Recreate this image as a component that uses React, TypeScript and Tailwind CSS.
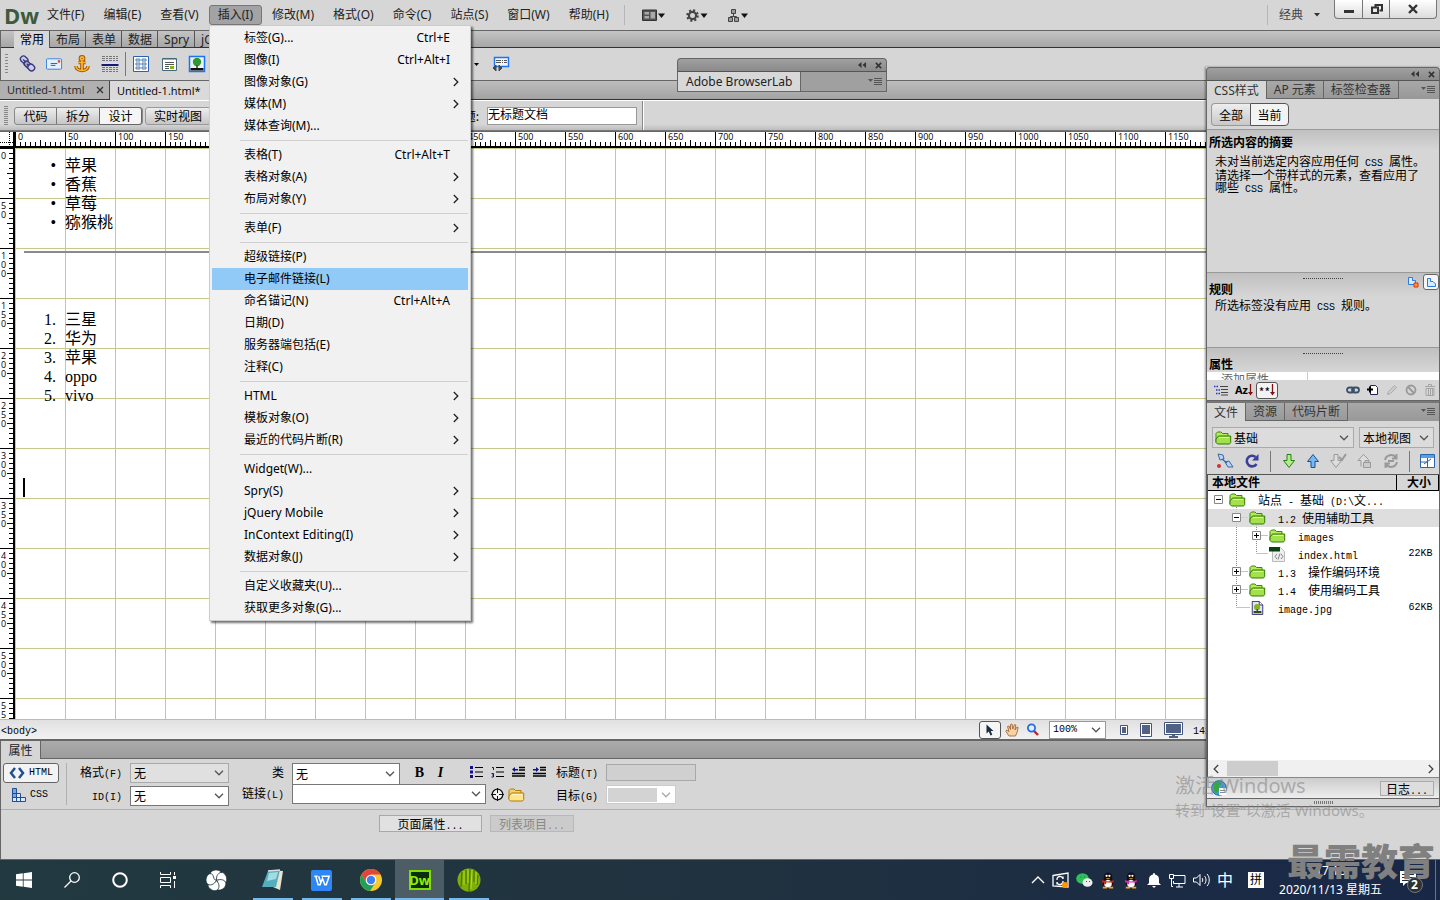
import { Fragment, type ReactNode } from "react";
import clsx from "clsx";

const uiFont = "font-['Noto_Sans','Noto_Sans_CJK_SC',sans-serif]";

type MenuEntry = { label: string; keys?: string; sub?: boolean; active?: boolean };

const menuGroups: MenuEntry[][] = [
  [
    { label: "标签(G)...", keys: "Ctrl+E" },
    { label: "图像(I)", keys: "Ctrl+Alt+I" },
    { label: "图像对象(G)", sub: true },
    { label: "媒体(M)", sub: true },
    { label: "媒体查询(M)..." },
  ],
  [
    { label: "表格(T)", keys: "Ctrl+Alt+T" },
    { label: "表格对象(A)", sub: true },
    { label: "布局对象(Y)", sub: true },
  ],
  [{ label: "表单(F)", sub: true }],
  [
    { label: "超级链接(P)" },
    { label: "电子邮件链接(L)", active: true },
    { label: "命名锚记(N)", keys: "Ctrl+Alt+A" },
    { label: "日期(D)" },
    { label: "服务器端包括(E)" },
    { label: "注释(C)" },
  ],
  [
    { label: "HTML", sub: true },
    { label: "模板对象(O)", sub: true },
    { label: "最近的代码片断(R)", sub: true },
  ],
  [
    { label: "Widget(W)..." },
    { label: "Spry(S)", sub: true },
    { label: "jQuery Mobile", sub: true },
    { label: "InContext Editing(I)", sub: true },
    { label: "数据对象(J)", sub: true },
  ],
  [{ label: "自定义收藏夹(U)..." }, { label: "获取更多对象(G)..." }],
];

// Latin runs are set in a narrow monospace so that they take half a CJK cell
const Song = ({ text }: { text: string }) => (
  <>
    {text.split(/([\x20-\x7e]+)/).map((part, i) =>
      i % 2 ? (
        <span
          key={i}
          className="font-['Liberation_Mono','Noto_Sans_CJK_SC',monospace] text-[10px] leading-none whitespace-pre"
        >
          {part}
        </span>
      ) : (
        <Fragment key={i}>{part}</Fragment>
      )
    )}
  </>
);

const Chevron = ({ className }: { className?: string }) => (
  <svg
    viewBox="0 0 10 6"
    className={clsx("pointer-events-none h-[6px] w-[10px]", className)}
    fill="none"
    stroke="currentColor"
    strokeWidth="1.3"
  >
    <path d="M1 .8 5 4.8 9 .8" />
  </svg>
);

type ComboProps = { label: string; id: string; value: string; className: string; disabled?: boolean };

const Combo = ({ label, id, value, className, disabled }: ComboProps) => (
  <div className={clsx("relative flex items-center border", className)}>
    <select
      id={id}
      aria-label={label}
      disabled={disabled}
      className="h-full w-full appearance-none bg-transparent px-[3px] text-black outline-none"
    >
      <option>{value}</option>
    </select>
    <Chevron
      className={clsx("absolute right-[4px]", disabled ? "text-[#aaa]" : "text-[#555]")}
    />
  </div>
);

const PanelMenu = () => (
  <svg viewBox="0 0 14 10" className="mr-[4px] ml-auto h-[10px] w-[14px]">
    <path d="M0 2h5L2.500 5z" fill="#555" />
    <path d="M6 1.500h8M6 3.500h8M6 5.500h8M6 7.500h8" stroke="#555" />
  </svg>
);

const PanelTitle = () => (
  <div className="flex h-[14px] items-center justify-end gap-[9px] rounded-t-[4px] border border-[#666] border-b-[#555] bg-linear-to-b from-[#a0a0a0] to-[#8a8a8a] pr-[4px]">
    <svg viewBox="0 0 8 6" className="h-[6px] w-[8px]" fill="#333">
      <path d="M3.500 0v6L0 3zM8 0v6L4.500 3z" />
    </svg>
    <svg viewBox="0 0 8 8" className="h-[7px] w-[7px]">
      <path d="m1 1 6 6M7 1 1 7" stroke="#333" strokeWidth="1.800" />
    </svg>
  </div>
);

const Folder = ({ yellow }: { yellow?: boolean }) => (
  <svg viewBox="0 0 17 14" className="h-[14px] w-[17px] shrink-0">
    <path
      d="M1 11V2.500L2.500 1H6l1.500 1.500H13V5"
      fill={yellow ? "#f6d264" : "#b8e85c"}
      stroke={yellow ? "#b07a10" : "#3a8a0c"}
    />
    <path
      d="M3.500 5h12.200v6.500L14.500 13H2.500L1 11.500V8z"
      fill={yellow ? "#ffe68a" : "#a4e04a"}
      stroke={yellow ? "#b07a10" : "#2f7a08"}
    />
    <path d="M4 6.500h10" stroke={yellow ? "#fff6c8" : "#dcf9a8"} />
  </svg>
);

const MenuBar = () => (
  <header className={clsx("flex h-[30px] shrink-0 items-center text-[12px] text-[#222]", uiFont)}>
    <span className="w-[38px] pl-[4px] font-['Liberation_Sans_Narrow','Open_Sans',sans-serif] text-[22px] leading-[26px] font-bold text-[#3d5a3d]">
      Dw
    </span>
    <nav className="flex items-center gap-px">
      {[
        "文件(F)",
        "编辑(E)",
        "查看(V)",
        "插入(I)",
        "修改(M)",
        "格式(O)",
        "命令(C)",
        "站点(S)",
        "窗口(W)",
        "帮助(H)",
      ].map((name) => (
        <button
          key={name}
          className={clsx(
            "h-[20px] rounded-[3px] border px-[8px] whitespace-nowrap",
            name === "插入(I)" ? "border-[#777] bg-[#a3a3a3]" : "border-transparent"
          )}
        >
          {name}
        </button>
      ))}
    </nav>
    <div className="ml-[6px] flex h-[20px] items-center gap-[20px] border-l border-[#b5b5b5] pl-[17px]">
      <button aria-label="布局" className="flex items-center">
        <svg viewBox="0 0 24 13" className="h-[13px] w-[24px]">
          <path d="M.5 1h14v10.500H.5z" fill="#555" stroke="#333" />
          <path d="M2.500 3H7v2.500H2.500zM2.500 7H7v2.500H2.500zM8.500 3h4.500v6.500H8.500z" fill="#aaa" />
          <path d="M16 4.500h7L19.500 9z" fill="#111" />
        </svg>
      </button>
      <button aria-label="扩展">
        <svg viewBox="0 0 22 13" className="h-[13px] w-[22px]">
          <circle cx="6.500" cy="6.500" r="3.600" fill="none" stroke="#444" strokeWidth="2.200" />
          <circle
            cx="6.500"
            cy="6.500"
            r="5.300"
            fill="none"
            stroke="#444"
            strokeWidth="2"
            strokeDasharray="2.080 2.080"
          />
          <path d="M14.500 4.500h7L18 9z" fill="#111" />
        </svg>
      </button>
      <button aria-label="站点">
        <svg viewBox="0 0 20 13" className="h-[13px] w-[20px]">
          <path d="M5.500 4v3.500M2.500 9V7.500h6V9" stroke="#444" fill="none" />
          <path d="M3.500.5h4v4h-4zM.5 8.500h4v4h-4zM6.500 8.500h4v4h-4z" fill="#999" stroke="#444" />
          <path d="M13 4.500h7L16.500 9z" fill="#111" />
        </svg>
      </button>
    </div>
    <div className="ml-auto flex h-[30px] items-center">
      <button className="flex h-[20px] items-center gap-[11px] border-l border-[#b5b5b5] px-[11px] text-[#444]">
        经典
        <svg viewBox="0 0 6 4" className="h-[4px] w-[6px]">
          <path d="M0 0h6L3 3.500z" fill="#333" />
        </svg>
      </button>
      <div className="mr-[3px] ml-[3px] flex h-[19px] self-start rounded-b-[4px] border border-t-0 border-[#777] bg-linear-to-b from-white to-[#dcdcdc]">
        <button aria-label="最小化" className="flex w-[28px] justify-center border-r border-[#777]">
          <svg viewBox="0 0 10 18" className="h-[18px] w-[10px]">
            <path d="M0 10h10v3H0z" fill="#333" />
          </svg>
        </button>
        <button aria-label="还原" className="flex w-[27px] justify-center border-r border-[#777]">
          <svg viewBox="0 0 13 18" className="h-[18px] w-[13px]" fill="none" stroke="#333" strokeWidth="2">
            <path d="M5.500 7V5H12v5.500H9.500M2 7.500h6V13H2z" />
          </svg>
        </button>
        <button aria-label="关闭" className="flex w-[46px] justify-center">
          <svg viewBox="0 0 10 18" className="h-[18px] w-[10px]">
            <path d="m1 5 8 8M9 5l-8 8" stroke="#333" strokeWidth="2.400" />
          </svg>
        </button>
      </div>
    </div>
  </header>
);

const InsertBar = () => (
  <section className={clsx("shrink-0 border-t border-l border-[#666] text-[12px]", uiFont)}>
    <div className="flex h-[17px] border-b border-[#333] bg-linear-to-b from-[#c4c4c4] to-[#a6a6a6] pl-[13px]">
      {["常用", "布局", "表单", "数据", "Spry", "jQuery Mobile", "InContext Editing"].map((tab, i) => (
        <button
          key={tab}
          className={clsx(
            "border-r border-[#555] pr-[5px] pl-[6px] leading-[17px] whitespace-nowrap",
            i === 0 ? "h-[17px] bg-[#d8d8d8] text-black" : "h-[16px] text-[#222]"
          )}
        >
          {tab}
        </button>
      ))}
    </div>
    <div className="flex h-[32px] items-center">
      <span className="ml-[4px] h-[20px] w-[3px] bg-[repeating-linear-gradient(#888_0_1px,transparent_1px_3px)]" />
      <div className="ml-[10px] flex items-center gap-[10px]">
        <svg viewBox="0 0 18 18" className="h-[18px] w-[18px]" fill="none">
          <g transform="rotate(45 9 9)" stroke="#3a3a78" strokeWidth="1.400">
            <rect x="0" y="5" width="8" height="6" rx="3" fill="#c9cdf5" />
            <rect x="6" y="6.500" width="8" height="5" rx="2.500" fill="#9da3e4" />
            <rect x="11" y="5.500" width="7" height="6" rx="3" fill="#c9cdf5" />
            <path d="M3 8.500h4M9 9h3" />
          </g>
        </svg>
        <svg viewBox="0 0 18 18" className="h-[18px] w-[17px]">
          <rect x=".5" y="3.500" width="16" height="11" rx="1" fill="#e3f0fd" stroke="#3280dd" />
          <path d="M5 8.500h7M5 10.500h5" stroke="#555" />
          <path d="M12.500 5h2.500v2.500h-2.500z" fill="#e2451c" />
        </svg>
        <svg viewBox="0 0 18 18" className="h-[18px] w-[18px]" fill="none">
          <g stroke="#a25806" strokeWidth="3.600">
            <circle cx="9" cy="3.500" r="1.600" />
            <path d="M9 6v9M5.500 7.500h7M3 11c0 3 3 4.500 6 4.500s6-1.500 6-4.500" />
          </g>
          <g stroke="#fbb433" strokeWidth="1.700">
            <circle cx="9" cy="3.500" r="1.600" />
            <path d="M9 6v9M5.500 7.500h7M3 11c0 3 3 4.500 6 4.500s6-1.500 6-4.500" />
          </g>
        </svg>
        <svg viewBox="0 0 18 18" className="h-[18px] w-[18px]">
          <path
            d="M1 1.500h16M1 3.500h16M1 5.500h16M1 12.500h16M1 14.500h16M1 16.500h16"
            stroke="#777"
            strokeDasharray="3 1 2 1"
          />
          <path d="M.5 7.500h17v3H.5z" fill="#d7dcff" />
          <path d="M.5 10h17" stroke="#161a70" strokeWidth="2" />
        </svg>
        <span className="-mx-[4px] h-[24px] w-px bg-[#777]" />
        <svg viewBox="0 0 18 18" className="h-[18px] w-[18px]">
          <path d="M1.500 1.500h15v15h-15z" fill="#fff" stroke="#2a62b0" />
          <path
            d="M4 4h4v2H4zM10 4h4v2h-4zM4 8h4v2H4zM10 8h4v2h-4zM4 12h4v2H4zM10 12h4v2h-4z"
            fill="#cfe2f8"
            stroke="#5580b8"
          />
        </svg>
        <svg viewBox="0 0 18 18" className="h-[18px] w-[18px]">
          <path d="M2.500 3.500h14v12h-14z" fill="#fff" stroke="#46687a" />
          <path d="M3 4.500h13" stroke="#8fb2c6" />
          <path d="M5 7.500h9M5 9.500h9M5 11.500h4M5 13.500h4" stroke="#555" />
          <path d="M10 11h4v3h-4z" fill="#7fb618" />
        </svg>
        <svg viewBox="0 0 18 18" className="h-[18px] w-[18px]">
          <path d="M1.500 1.500h15v15h-15z" fill="#e8f4ff" stroke="#1e74f0" strokeWidth="1.500" />
          <circle cx="9" cy="7" r="4.200" fill="#2f9a30" />
          <path d="M2.500 13h13v2.500h-13z" fill="#111" />
          <path d="M8.200 10h1.600v3H8.200z" fill="#6a4512" />
        </svg>
      </div>
      <svg viewBox="0 0 5 3" className="ml-[3px] h-[3px] w-[5px]">
        <path d="M0 0h5L2.500 3z" />
      </svg>
      <svg viewBox="0 0 5 3" className="ml-[260px] h-[3px] w-[5px]">
        <path d="M0 0h5L2.500 3z" />
      </svg>
      <svg viewBox="0 0 18 18" className="ml-[13px] h-[18px] w-[18px]">
        <path d="M2.500 2.500h14v9h-14z" fill="#eef6ff" stroke="#1e74f0" strokeWidth="1.400" />
        <path d="M4 5.500h5M10 5.500h1M12 5.500h3M4 7.500h5M10 7.500h1M12 7.500h3" stroke="#555" />
        <path d="m4 10-3 3 3 3zM7 10l3 3-3 3z" fill="#3c4c58" stroke="#3c4c58" />
      </svg>
    </div>
  </section>
);

const DocumentBar = () => (
  <section className="shrink-0">
    <div className="flex h-[20px] border-t border-b border-t-[#666] border-b-[#333] bg-linear-to-b from-[#bdbdbd] to-[#a3a3a3] font-['Open_Sans',sans-serif] text-[11px] leading-[18px] whitespace-nowrap">
      <button className="flex w-[110px] items-center justify-between border-r border-[#444] bg-[#b0b0b0] pr-[5px] pl-[7px] text-[#222]">
        Untitled-1.html
        <svg viewBox="0 0 8 8" className="h-[8px] w-[8px]">
          <path d="m1 1 6 6M7 1 1 7" stroke="#333" strokeWidth="1.300" />
        </svg>
      </button>
      <button className="h-[19px] w-[110px] bg-[#dadada] pl-[7px] text-left">Untitled-1.html*</button>
    </div>
    <div className="flex h-[31px] items-center border-t border-b border-t-white border-b-[#777] bg-linear-to-b from-[#d6d6d6] from-80% to-[#bdbdbd] font-['Noto_Sans_CJK_SC',sans-serif] text-[12px]">
      <span className="ml-[4px] h-[20px] w-[4px] bg-[repeating-linear-gradient(#888_0_1px,transparent_1px_2px)]" />
      <div className="ml-[6px] flex h-[18px] rounded-[3px] border border-[#888] bg-linear-to-b from-[#eee] to-[#c6c6c6]">
        <button className="w-[42px] border-r border-[#777] leading-[16px]">代码</button>
        <button className="w-[42px] leading-[16px]">拆分</button>
        <button className="-my-px w-[43px] rounded-r-[3px] border border-[#666] bg-[#f5f5f5] leading-[16px]">
          设计
        </button>
      </div>
      <button className="ml-[2px] h-[18px] w-[66px] rounded-[3px] border border-[#999] bg-linear-to-b from-[#eee] to-[#c6c6c6] leading-[16px]">
        实时视图
      </button>
      <label htmlFor="doc-title" className="w-[268px] text-right">
        标题:
      </label>
      <input
        id="doc-title"
        defaultValue="无标题文档"
        className="ml-[8px] h-[18px] w-[150px] border border-[#999] bg-white pb-[3px] outline-none"
      />
      <span className="ml-[5px] h-[29px] w-[2px] border-r border-l border-r-white border-l-[#888]" />
    </div>
  </section>
);

const fives = [5, 10, 15, 20, 25, 30, 35, 40, 45];

const RulerCell = ({ value }: { value: number }) => (
  <div className="relative h-[14px] w-[50px] shrink-0 border-l border-black pl-[2px] leading-[10px]">
    {value}
    <svg viewBox="0 0 50 14" className="absolute top-0 -left-px h-[14px] w-[50px]" stroke="#000">
      {fives.map((x) => (
        <path key={x} d={`M${x + 0.5} ${x === 25 ? 8 : 10}V14`} />
      ))}
    </svg>
  </div>
);

const SideRulerCell = ({ value }: { value: number }) => (
  <div className="relative flex h-[50px] w-full shrink-0 flex-col border-t border-black pt-[2px] pl-[1px] leading-[9px]">
    {String(value)
      .split("")
      .map((digit, i) => (
        <span key={i}>{digit}</span>
      ))}
    <svg viewBox="0 0 14 50" className="absolute -top-px right-0 h-[50px] w-[14px]" stroke="#000">
      {fives.map((y) => (
        <path key={y} d={`M${y === 25 ? 8 : 10} ${y + 0.5}H14`} />
      ))}
    </svg>
  </div>
);

const Marker = ({ children }: { children: ReactNode }) => (
  <span className="w-[41px] pr-[9px] text-right">{children}</span>
);

const Editor = () => (
  <main className="flex min-h-0 flex-1 flex-col bg-white">
    <div className="flex h-[17px] shrink-0 overflow-hidden border-t border-b-2 border-t-[#666] border-b-black font-['Open_Sans',sans-serif] text-[9px]">
      <div className="w-[15px] shrink-0 border-r-2 border-black">
        <svg viewBox="0 0 13 14" className="h-[14px] w-[13px]" stroke="#000" strokeDasharray="1 1">
          <path d="M0 10.500h13M9.500 0v14" />
        </svg>
      </div>
      {Array.from({ length: 24 }, (_, i) => (
        <RulerCell key={i} value={i * 50} />
      ))}
    </div>
    <div className="flex min-h-0 flex-1">
      <div className="flex w-[15px] shrink-0 flex-col overflow-hidden border-r-2 border-black font-['Open_Sans',sans-serif] text-[9px]">
        {Array.from({ length: 12 }, (_, i) => (
          <SideRulerCell key={i} value={i * 50} />
        ))}
      </div>
      <article className="flex-1 overflow-hidden bg-[linear-gradient(to_right,#c8c88c_1px,transparent_1px),linear-gradient(to_bottom,#c8c88c_1px,transparent_1px)] bg-size-[50px_50px] pt-[8px] pl-[9px] font-['Liberation_Serif','Noto_Sans_CJK_SC',serif] text-[16px] leading-[19px]">
        <ul>
          {["苹果", "香蕉", "草莓", "猕猴桃"].map((fruit) => (
            <li key={fruit} className="flex">
              <Marker>•</Marker>
              {fruit}
            </li>
          ))}
        </ul>
        <hr className="mt-[19px] border-t-2 border-t-[#8a8a8a]" />
        <ol className="mt-[57px]">
          {["三星", "华为", "苹果", "oppo", "vivo"].map((brand, i) => (
            <li key={brand} className="flex">
              <Marker>{i + 1}.</Marker>
              {brand}
            </li>
          ))}
        </ol>
        <div className="-ml-px mt-[73px] h-[19px] w-[2px] bg-black" />
      </article>
    </div>
  </main>
);

const StatusBar = () => (
  <div className="flex h-[20px] shrink-0 items-center justify-between overflow-hidden border-t border-[#bbb] bg-linear-to-b from-[#e0e0e0] to-[#f2f2f2] text-[12px]">
    <span className="pl-[1px] leading-[16px]">
      <Song text="<body>" />
    </span>
    <div className="flex w-[461px] items-center">
      <button
        aria-label="选取"
        className="flex h-[18px] w-[22px] items-center justify-center rounded-[3px] border border-[#555] bg-[#f5f5f5]"
      >
        <svg viewBox="0 0 8 12" className="h-[12px] w-[8px]">
          <path d="M.5.500v9L2.800 7.600 4.500 11.500l1.800-.8L4.700 7h2.800z" fill="#1c2c3c" />
        </svg>
      </button>
      <svg viewBox="0 0 14 14" className="ml-[4px] h-[14px] w-[14px]">
        <path
          d="M4 13 1 8.500 1.500 7 4 8.500 2.500 3.500l1.500-.500L5.500 6.500V1.500L7 1l.800 5L9.500 1.500l1.300.5L10 7l2-3 1.200.5L12 9.500 10.500 13z"
          fill="#f9d2a4"
          stroke="#9a5a24"
          strokeWidth=".8"
        />
      </svg>
      <svg viewBox="0 0 14 14" className="ml-[7px] h-[14px] w-[14px]" fill="none">
        <path d="m8 8 4 4" stroke="#b02a2a" strokeWidth="2.400" />
        <circle cx="5.500" cy="5" r="3.600" fill="#dff0ff" stroke="#2a6be0" strokeWidth="1.800" />
      </svg>
      <Combo
        id="zoom"
        label="缩放比率"
        value="100%"
        className="ml-[9px] h-[18px] w-[57px] border-[#999] bg-white font-['Liberation_Mono',monospace] text-[10px]"
      />
      <svg viewBox="0 0 8 10" className="ml-[14px] h-[10px] w-[8px]">
        <path d="M.5.500h7v9h-7z" fill="#fff" stroke="#445577" />
        <path d="M2 2h4v6H2z" fill="#526287" />
      </svg>
      <svg viewBox="0 0 12 14" className="ml-[12px] h-[14px] w-[12px]">
        <path d="M.5.500h11v13H.5z" fill="#fff" stroke="#445577" />
        <path d="M2 2h8v9H2z" fill="#526287" />
      </svg>
      <svg viewBox="0 0 19 16" className="ml-[12px] h-[16px] w-[19px]">
        <path d="M.5.500h18v12H.5z" fill="#fff" stroke="#445577" />
        <path d="M2 2h15v9H2zM8 13h3v1h3v2H5v-2h3z" fill="#526287" />
      </svg>
      <span className="ml-[10px] whitespace-nowrap">
        <Song text="1425 x 577" />
      </span>
    </div>
  </div>
);

const Tool = ({ label, children }: { label: string; children: ReactNode }) => (
  <button aria-label={label} className="flex w-[21px] items-center justify-center">
    {children}
  </button>
);

const PropertyInspector = () => (
  <section className="h-[121px] shrink-0 border-t-2 border-b border-l border-[#666] bg-[#d6d6d6] font-['Noto_Sans_CJK_SC',sans-serif] text-[12px]">
    <div className="flex h-[18px] border-b border-[#666] bg-linear-to-b from-[#ababab] to-[#9c9c9c]">
      <button className="h-[18px] w-[40px] border-r border-[#666] bg-[#d6d6d6] text-[#222]">属性</button>
    </div>
    <div className="flex h-[51px] border-b border-[#b0b0b0] pt-[4px]">
      <div className="mr-[7px] ml-[2px] w-[56px]">
        <button className="flex h-[20px] w-full items-center justify-center gap-[4px] rounded-[3px] border border-[#666] bg-[#f3f3f3]">
          <svg viewBox="0 0 16 12" className="h-[12px] w-[16px]" fill="none" stroke="#1d4f96" strokeWidth="2.500">
            <path d="M6 1 2 6l4 5M10 1l4 5-4 5" />
          </svg>
          <Song text="HTML" />
        </button>
        <button className="mt-[2px] flex h-[20px] items-center gap-[4px] pl-[9px]">
          <svg viewBox="0 0 14 14" className="h-[14px] w-[14px]" stroke="#1d4f96">
            <path d="M.5.500h4v13h-4z" fill="#7ea4d8" />
            <path d="M.5 9.500h13v4H.5zM4.500 5.500h4v8h-4z" fill="#dce9fa" />
            <path d="M.5 5.500h4" />
          </svg>
          <Song text="CSS" />
        </button>
      </div>
      <div className="h-[42px] w-[56px] border-l border-[#b0b0b0] text-right">
        <label htmlFor="format" className="block leading-[18px] whitespace-nowrap">
          <Song text="格式(F)" />
        </label>
        <label htmlFor="el-id" className="mt-[5px] block leading-[18px]">
          <Song text="ID(I)" />
        </label>
      </div>
      <div className="ml-[8px] flex flex-col gap-[3px]">
        <Combo id="format" label="格式" value="无" className="h-[20px] w-[99px] border-[#aaa] bg-[#e0e0e0]" />
        <Combo id="el-id" label="ID" value="无" className="h-[20px] w-[99px] border-[#777] bg-white" />
      </div>
      <div className="w-[55px] text-right">
        <label htmlFor="class" className="block leading-[18px]">
          类
        </label>
        <label htmlFor="link" className="mt-[3px] block leading-[18px]">
          <Song text="链接(L)" />
        </label>
      </div>
      <div className="ml-[8px]">
        <div className="flex">
          <Combo id="class" label="类" value="无" className="h-[22px] w-[108px] border-[#777] bg-white" />
          <div className="flex h-[18px] items-center pl-[9px]">
            <button className="w-[21px] font-['Liberation_Serif',serif] text-[14px] font-bold">B</button>
            <button className="w-[21px] font-['Liberation_Serif',serif] text-[14px] font-bold italic">I</button>
            <span className="w-[15px]" />
            <Tool label="项目列表">
              <svg viewBox="0 0 13 12" className="h-[12px] w-[13px]">
                <path d="M0 0h3v3H0zM0 4.500h3v3H0zM0 9h3v3H0z" fill="#10108a" />
                <path d="M5 1.500h8M5 6h8M5 10.500h8" stroke="#000" />
              </svg>
            </Tool>
            <Tool label="编号列表">
              <svg viewBox="0 0 13 12" className="h-[12px] w-[13px]">
                <path d="M1 1.500h1.500V4M.5 7.500h2v1.500h-1h1v2h-2" stroke="#10108a" fill="none" />
                <path d="M5 1.500h8M5 6h8M5 10.500h8" stroke="#000" />
              </svg>
            </Tool>
            <Tool label="文本凸出">
              <svg viewBox="0 0 13 12" className="h-[12px] w-[13px]">
                <path d="M0 3.500 3 1v5zM3 3h3v1.500H3z" fill="#10108a" />
                <path d="M7 1.500h6M7 4h6M0 7.500h13M0 10h13" stroke="#000" strokeWidth="1.500" />
              </svg>
            </Tool>
            <Tool label="文本缩进">
              <svg viewBox="0 0 13 12" className="h-[12px] w-[13px]">
                <path d="M6 3.500 3 1v5zM0 3h3v1.500H0z" fill="#10108a" />
                <path d="M7 1.500h6M7 4h6M0 7.500h13M0 10h13" stroke="#000" strokeWidth="1.500" />
              </svg>
            </Tool>
          </div>
        </div>
        <div className="flex items-center">
          <Combo id="link" label="链接" value="" className="-mt-px h-[20px] w-[194px] border-[#777] bg-white" />
          <button aria-label="指向文件" className="ml-[5px]">
            <svg viewBox="0 0 13 13" className="h-[13px] w-[13px]" fill="none" stroke="#111">
              <circle cx="6.500" cy="6.500" r="5.300" fill="#f4f4f4" strokeWidth="1.300" />
              <path d="M6.500 0v5M6.500 8v5M0 6.500h5M8 6.500h5" />
            </svg>
          </button>
          <button aria-label="浏览文件" className="ml-[4px]">
            <Folder yellow />
          </button>
        </div>
      </div>
      <div className="w-[48px] pl-[6px] whitespace-nowrap">
        <label htmlFor="title" className="block leading-[18px]">
          <Song text="标题(T)" />
        </label>
        <label htmlFor="target" className="mt-[5px] block leading-[18px]">
          <Song text="目标(G)" />
        </label>
      </div>
      <div className="ml-[8px]">
        <input
          id="title"
          disabled
          className="mt-px block h-[17px] w-[90px] border border-[#a8a8a8] bg-[#d0d0d0]"
        />
        <div className="relative mt-[4px] flex h-[19px] w-[70px] items-center border border-[#ccc] bg-white">
          <select id="target" disabled className="ml-px h-[14px] w-[49px] appearance-none bg-[#d3d3d3]" />
          <Chevron className="absolute right-[4px] text-[#aaa]" />
        </div>
      </div>
    </div>
    <div className="flex gap-[8px] pt-[5px] pl-[378px]">
      <button className="h-[17px] w-[103px] border border-[#a8a8a8] bg-[#e1e1e1] leading-[15px]">
        <Song text="页面属性..." />
      </button>
      <button disabled className="h-[17px] w-[84px] border border-[#b8b8b8] bg-[#cbcbcb] leading-[15px] text-[#888]">
        <Song text="列表项目..." />
      </button>
    </div>
  </section>
);

const InsertMenu = () => (
  <div
    className={clsx(
      "absolute top-[25px] left-[209px] w-[262px] border border-[#ccc] bg-[#f1f1f1] px-[2px] py-px text-[12px] text-black shadow-[2px_2px_2px_rgba(0,0,0,0.55)]",
      uiFont
    )}
  >
    {menuGroups.map((group, i) => (
      <Fragment key={i}>
        {i > 0 && <hr className="my-[3px] ml-[28px] border-[#d0d0d0]" />}
        {group.map(({ label, keys, sub, active }) => (
          <button
            key={label}
            className={clsx(
              "flex h-[22px] w-full items-center pr-[7px] pl-[32px]",
              active && "bg-[#91c9f7]"
            )}
          >
            {label}
            {keys && <span className="mr-[11px] ml-auto">{keys}</span>}
            {sub && <Chevron className="ml-auto h-[5px] w-[8px] -rotate-90 text-[#222]" />}
          </button>
        ))}
      </Fragment>
    ))}
  </div>
);

const BrowserLab = () => (
  <aside className={clsx("absolute top-[58px] left-[677px] w-[210px] text-[12px]", uiFont)}>
    <PanelTitle />
    <div className="flex h-[20px] items-center border border-t-0 border-[#666] bg-[#a0a0a0]">
      <button className="h-full border-r border-[#666] bg-[#d8d8d8] px-[8px] text-[12px] whitespace-nowrap text-[#222]">
        Adobe BrowserLab
      </button>
      <PanelMenu />
    </div>
  </aside>
);

const PanelTabs = ({ tabs }: { tabs: string[] }) => (
  <div className={clsx("flex h-[18px] shrink-0 items-center bg-linear-to-b from-[#a8a8a8] to-[#989898]", uiFont)}>
    {tabs.map((tab, i) => (
      <button
        key={tab}
        className={clsx(
          "h-full border-r border-[#666] px-[7px] leading-[17px] whitespace-nowrap",
          i === 0 ? "bg-[#d6d6d6] text-[#333]" : "border-b text-[#333]"
        )}
      >
        {tab}
      </button>
    ))}
    <PanelMenu />
  </div>
);

const Heading = ({ children, grip }: { children: ReactNode; grip?: boolean }) => (
  <div className="border-t border-[#999] bg-linear-to-b from-[#c0c0c0] to-[#d6d6d6] px-[2px]">
    {grip && <div className="mx-auto mt-[5px] -mb-[2px] h-px w-[40px] border-t border-dotted border-[#444]" />}
    <h2 className="pt-[3px] leading-[17px] font-bold">{children}</h2>
  </div>
);

const files = [
  { name: "1.2 使用辅助工具", depth: 1, toggle: "-", icon: "folder", size: "", selected: true },
  { name: "images", depth: 2, toggle: "+", icon: "folder", size: "" },
  { name: "index.html", depth: 2, toggle: "", icon: "html", size: "22KB" },
  { name: "1.3  操作编码环境", depth: 1, toggle: "+", icon: "folder", size: "" },
  { name: "1.4  使用编码工具", depth: 1, toggle: "+", icon: "folder", size: "" },
  { name: "image.jpg", depth: 1, toggle: "", icon: "image", size: "62KB" },
];

const Toggle = ({ sign }: { sign: string }) => (
  <svg viewBox="0 0 9 9" className="h-[9px] w-[9px] shrink-0" stroke="#000">
    <path d="M.5.500h8v8h-8z" fill="#fff" stroke="#888" />
    <path d={sign === "+" ? "M2 4.500h5M4.500 2v5" : "M2 4.500h5"} />
  </svg>
);

const FileIcon = ({ kind }: { kind: string }) => {
  if (kind === "folder") return <Folder />;
  if (kind === "html") {
    return (
      <svg viewBox="0 0 17 16" className="h-[16px] w-[17px] shrink-0">
        <path d="M3.500 1.500h8l4 4v10h-12z" fill="#eee" stroke="#bbb" />
        <path d="M0 1h11v4.500H0z" fill="#0a4012" />
        <path d="m8 8-2 2.500L8 13M12 8l2 2.500-2 2.500M11 7.500l-2 6" fill="none" stroke="#888" />
      </svg>
    );
  }
  return (
    <svg viewBox="0 0 17 16" className="h-[14px] w-[17px] shrink-0">
      <path d="M2.500.500h8l4 4v11h-12z" fill="#dfe4ff" stroke="#222266" />
      <path d="M10.500.500v4h4" fill="#fff" stroke="#222266" />
      <circle cx="8" cy="7" r="3.500" fill="#86b41c" />
      <path d="M7.500 9h1.500v3H7.500zM4 11.500h9V14H4z" fill="#34500c" />
    </svg>
  );
};

const FileTable = () => (
  <div className="relative min-h-0 flex-1 border-t border-l border-[#555] bg-white">
    <svg className="absolute top-[22px] left-0 h-[130px] w-[60px]" stroke="#888" strokeDasharray="1 1" fill="none">
      <path d="M28.500 8v102M28.500 20.500H40M28.500 74.500H40M28.500 92.500H40M28.500 110.500H42M48.500 26v30M48.500 38.500H60M48.500 56.500H60" />
    </svg>
    <table className="relative w-full table-fixed border-collapse">
      <thead>
        <tr className="h-[15px] border-b border-black bg-[#d6d6d6] text-left leading-[14px]">
          <th className="border-r border-black pl-[4px]">本地文件</th>
          <th className="w-[42px] border-r border-black pl-[10px]">大小</th>
        </tr>
      </thead>
      <tbody>
        <tr className="h-[18px]">
          <td colSpan={2}>
            <div className="flex h-[18px] items-center pl-[6px] leading-[16px] whitespace-nowrap">
              <Toggle sign="-" />
              <span className="w-[6px]" />
              <Folder />
              <span className="ml-[12px]">
                <Song text="站点 - 基础 (D:\文..." />
              </span>
            </div>
          </td>
        </tr>
        {files.map(({ name, depth, toggle, icon, size, selected }) => (
          <tr key={name} className={clsx("h-[18px]", selected && "bg-[#d6d6d6]/80")}>
            <td className={clsx(depth === 1 ? "pl-[24px]" : "pl-[44px]")}>
              <div className="flex h-[18px] items-center leading-[16px] whitespace-nowrap">
                {toggle ? <Toggle sign={toggle} /> : <span className="w-[9px] shrink-0" />}
                <span className="w-[8px] shrink-0" />
                <FileIcon kind={icon} />
                <span className="ml-[12px]">
                  <Song text={name} />
                </span>
              </div>
            </td>
            <td>
              <div className="flex h-[18px] items-center justify-end pr-[6px] leading-[16px]">
                <Song text={size} />
              </div>
            </td>
          </tr>
        ))}
      </tbody>
    </table>
  </div>
);

const SidePanels = () => (
  <aside className="absolute top-[67px] right-0 bottom-[93px] flex w-[234px] flex-col bg-[#d6d6d6] font-['Noto_Sans_CJK_SC',sans-serif] text-[12px] text-black shadow-[-1px_0_2px_rgba(0,0,0,0.4)]">
    <PanelTitle />
    <div className="flex min-h-0 flex-1 flex-col border-r border-b border-l border-[#666]">
      <PanelTabs tabs={["CSS样式", "AP 元素", "标签检查器"]} />
      <div className="flex h-[30px] shrink-0 items-center pl-[4px]">
        <button className="h-[23px] w-[39px] rounded-l-[4px] border border-r-0 border-[#999] bg-linear-to-b from-[#eee] to-[#c8c8c8] leading-[19px]">
          全部
        </button>
        <button className="h-[23px] w-[39px] rounded-r-[4px] border border-[#555] bg-[#f3f3f3] leading-[19px]">
          当前
        </button>
      </div>
      <div className="h-[143px] shrink-0">
        <Heading>所选内容的摘要</Heading>
        <p className="pt-[5px] pl-[8px] leading-[12px] whitespace-nowrap">
          <Song text="未对当前选定内容应用任何 CSS 属性。" />
          <br />
          请选择一个带样式的元素，查看应用了
          <br />
          <Song text="哪些 CSS 属性。" />
        </p>
      </div>
      <div className="relative h-[75px] shrink-0">
        <Heading grip>规则</Heading>
        <p className="pl-[8px] leading-[16px]">
          <Song text="所选标签没有应用 CSS 规则。" />
        </p>
        <div className="absolute top-[2px] right-0 flex items-center gap-[4px]">
          <button aria-label="显示所选属性的信息">
            <svg viewBox="0 0 12 12" className="h-[12px] w-[12px]">
              <path d="M1.500 1.500h4v3h3v4h-7z" fill="#d9ecff" stroke="#2d7be0" />
              <path d="M7 7h4v4H7z" fill="#ff9a2e" stroke="#e03010" />
            </svg>
          </button>
          <button
            aria-label="显示层叠"
            className="flex h-[16px] w-[16px] items-center justify-center rounded-[3px] border border-[#666] bg-[#f6f6f6]"
          >
            <svg viewBox="0 0 11 11" className="h-[11px] w-[11px]">
              <path d="M1.500 1.500h3v3H7l2.500 2.500v2.500h-8z" fill="#d9ecff" stroke="#2d7be0" />
            </svg>
          </button>
        </div>
      </div>
      <div className="h-[33px] shrink-0 overflow-hidden">
        <Heading grip>属性</Heading>
        <div className="flex bg-white pl-[14px] leading-[14px] text-[#666]">
          <span className="w-[87px] border-r border-[#ccc]">添加属性</span>
        </div>
      </div>
      <div className="flex h-[21px] shrink-0 items-center border-b border-[#666] pr-[3px] pl-[6px]">
        <svg viewBox="0 0 16 12" className="h-[12px] w-[16px]">
          <path d="M1 2.500h4M3 6h4M3 9.500h4" stroke="#2038c0" strokeWidth="1.500" strokeDasharray="1.500 1" />
          <path d="M7 2.500h8M8 5.500h7M8 8.500h7M8 11h7" stroke="#444" />
        </svg>
        <span className="ml-[6px] font-['Open_Sans',sans-serif] text-[11px] font-bold">Az</span>
        <svg viewBox="0 0 5 12" className="h-[12px] w-[5px]">
          <path d="M2.500 0v9" stroke="#801010" strokeWidth="1.300" />
          <path d="M0 8h5l-2.500 3.500z" fill="#801010" />
        </svg>
        <button className="ml-[3px] flex h-[17px] w-[22px] items-center justify-center rounded-[3px] border border-[#555] bg-[#f3f3f3]">
          <span className="pt-[3px] text-[12px] leading-[12px]">**</span>
          <svg viewBox="0 0 5 12" className="h-[12px] w-[5px]">
            <path d="M2.500 0v9" stroke="#801010" strokeWidth="1.300" />
            <path d="M0 8h5l-2.500 3.500z" fill="#801010" />
          </svg>
        </button>
        <div className="ml-auto flex items-center gap-[7px]">
          <svg viewBox="0 0 14 8" className="h-[8px] w-[14px]" fill="none" stroke="#3a5068" strokeWidth="1.800">
            <rect x="1" y="1.500" width="7" height="5" rx="2.500" />
            <rect x="6" y="1.500" width="7" height="5" rx="2.500" />
          </svg>
          <svg viewBox="0 0 12 12" className="h-[12px] w-[12px]">
            <path d="M3.500 1.500h5l2 2v7h-7z" fill="#fff" stroke="#22225a" />
            <path d="M0 5.500h6M3 2.500v6" stroke="#000" strokeWidth="2" />
          </svg>
          <svg viewBox="0 0 12 12" className="h-[12px] w-[12px]">
            <path d="m1.500 10.500 1-3 6-6 2 2-6 6z" fill="#ccc" stroke="#aaa" />
          </svg>
          <svg viewBox="0 0 12 12" className="h-[12px] w-[12px]" fill="none" stroke="#999" strokeWidth="1.800">
            <circle cx="6" cy="6" r="4.500" />
            <path d="m3 3 6 6" />
          </svg>
          <svg viewBox="0 0 12 12" className="h-[12px] w-[12px]" fill="none" stroke="#a5a5a5">
            <path d="M1 2.500h10M4.500 2V.500h3V2M2 4.500h8v7H2zM4.500 5v6M6.500 5v6M8.500 5v6" />
          </svg>
        </div>
      </div>
      <div className="h-[2px] shrink-0 bg-[#777]" />
      <PanelTabs tabs={["文件", "资源", "代码片断"]} />
      <div className="flex h-[27px] shrink-0 items-end justify-between pr-[5px] pl-[5px]">
        <div className="relative h-[21px] w-[142px]">
          <span className="pointer-events-none absolute top-[4px] left-[3px] z-10">
            <Folder />
          </span>
          <Combo id="site" label="站点" value="基础" className="h-[21px] border-[#aaa] bg-[#dcdcdc] pl-[18px]" />
        </div>
        <Combo id="view" label="视图" value="本地视图" className="h-[21px] w-[75px] border-[#aaa] bg-[#dcdcdc]" />
      </div>
      <div className="flex h-[26px] shrink-0 items-center justify-between pr-[4px] pl-[9px]">
        <svg viewBox="0 0 18 18" className="h-[18px] w-[18px]">
          <path d="m2 2 5 1 1 4-4 1zM9 10l4-1 4 6-5 0z" fill="#bcd4f4" stroke="#3a66a8" />
          <path d="m6 7 5 4" stroke="#3a66a8" strokeWidth="1.500" />
          <circle cx="3" cy="14" r="2" fill="#d03030" />
        </svg>
        <svg viewBox="0 0 16 16" className="h-[16px] w-[16px]" fill="none">
          <path d="M12.500 11A5.300 5.300 0 1 1 11.500 4" stroke="#3c3f98" strokeWidth="2.600" />
          <path d="M14.500 1v6.500H8z" fill="#3c3f98" />
        </svg>
        <span className="h-[21px] w-px bg-[#777]" />
        <svg viewBox="0 0 14 16" className="h-[16px] w-[14px]">
          <path d="M5 1.500h4v6h3.500L7 14.500 1.500 7.500H5z" fill="#b0ec88" stroke="#2b7a1a" />
        </svg>
        <svg viewBox="0 0 14 16" className="h-[16px] w-[14px]">
          <path d="M5 14.500h4v-6h3.500L7 1.500 1.500 8.500H5z" fill="#74b8f4" stroke="#1f4f8a" />
        </svg>
        <svg viewBox="0 0 17 16" className="h-[16px] w-[17px]">
          <path d="M4 1.500h4v6h3.500L6 14.500.500 7.500H4z" fill="#ddd" stroke="#999" />
          <path d="m9 4 3 3 4-6" fill="none" stroke="#999" strokeWidth="2" />
        </svg>
        <svg viewBox="0 0 15 16" className="h-[16px] w-[15px]" stroke="#999">
          <path d="M4 13.500V7.500H1L6.500 1.500l5 5" fill="#ddd" />
          <path d="M6.500 9.500h7v5h-7zM8 9V7.500h4V9" fill="#ccc" />
        </svg>
        <svg viewBox="0 0 16 16" className="h-[16px] w-[16px]" fill="none" stroke="#999" strokeWidth="2">
          <path d="M2 7a6 6 0 0 1 11-2M14 9a6 6 0 0 1-11 2M13.500 1v4.500H9M2.500 15v-4.500H7M5 8h6" />
        </svg>
        <span className="h-[21px] w-px bg-[#777]" />
        <svg viewBox="0 0 15 14" className="h-[14px] w-[15px]">
          <path d="M.5.500h14v13H.5z" fill="#fff" stroke="#2d64a8" />
          <path d="M1 2.500h13" stroke="#4fa0ee" strokeWidth="3" />
          <path d="M7.500 4v9M7 8H1M4 10l7-5" stroke="#2d64a8" />
        </svg>
      </div>
      <FileTable />
      <div className="flex h-[17px] shrink-0 items-center border-l border-[#555] bg-[#f0f0f0]">
        <Chevron className="ml-[3px] rotate-90 text-[#444]" />
        <span className="ml-[6px] h-[15px] w-[51px] bg-[#cdcdcd]" />
        <Chevron className="mr-[3px] ml-auto -rotate-90 text-[#444]" />
      </div>
      <div className="flex h-[21px] shrink-0 items-center border-t border-[#888] bg-linear-to-b from-[#ccc] to-[#eee] pr-[5px] pl-[4px]">
        <svg viewBox="0 0 16 16" className="h-[16px] w-[16px]">
          <circle cx="8" cy="8" r="7.300" fill="#3f9be0" stroke="#2b6a98" />
          <path d="M3 4c3-3 6-2 7-1S7 6 8 8s-1 5-3 5-3-6-2-9z" fill="#39a646" />
          <path d="M8 8h7v7H8z" fill="#fff" />
          <path d="M9 10.500h5M9 12.500h5" stroke="#888" />
        </svg>
        <button className="ml-auto h-[15px] w-[54px] border border-[#aaa] bg-[#ddd] leading-[13px]">
          <Song text="日志..." />
        </button>
      </div>
      <div className="flex h-[8px] shrink-0 justify-center border-t border-[#666] pt-[2px]">
        <span className="h-[3px] w-[19px] bg-[repeating-linear-gradient(to_right,#777_0_1px,transparent_1px_2px)]" />
      </div>
    </div>
  </aside>
);

type TaskButtonProps = { label: string; open?: boolean; current?: boolean; children: ReactNode };

const TaskButton = ({ label, open, current, children }: TaskButtonProps) => (
  <button
    aria-label={label}
    className={clsx("flex h-[40px] w-[49px] flex-col items-center", current && "bg-white/20")}
  >
    <span className="flex h-[38px] items-center pt-[2px]">{children}</span>
    {open && <span className={clsx("h-[2px] bg-[#76b9ed]", current ? "w-full" : "w-[40px]")} />}
  </button>
);

const Penguin = ({ scarf }: { scarf: string }) => (
  <svg viewBox="0 0 16 18" className="h-[17px] w-[16px]">
    <ellipse cx="8" cy="11" rx="6" ry="5.500" fill="#111" />
    <circle cx="8" cy="5" r="4.500" fill="#111" />
    <ellipse cx="8" cy="12.500" rx="4" ry="4" fill="#fff" />
    <circle cx="6.500" cy="4" r="1.200" fill="#fff" />
    <circle cx="9.500" cy="4" r="1.200" fill="#fff" />
    <path d="M5.500 6.500h5L8 8z" fill="#f9a51a" />
    <path d="M2 8.500c4 2 8 2 12 0v2.500H6v2H4v-2H1.500z" fill={scarf} />
    <path d="M2.500 16.500h4.500M9 16.500h4.500" stroke="#f9a51a" strokeWidth="2" />
  </svg>
);

const Taskbar = () => (
  <footer
    className={clsx(
      "flex h-[40px] shrink-0 items-center bg-linear-to-r from-[#223940] via-[#20323f] to-[#192747] text-white",
      uiFont
    )}
  >
    <div className="flex w-[192px] items-center">
      {[
        <svg key="start" viewBox="0 0 16 16" className="h-[16px] w-[16px]" fill="#fff">
          <path d="M0 2.300 6.800 1.300V7.600H0zM7.600 1.200 16 0v7.600H7.600zM0 8.400h6.800v6.300L0 13.700zM7.600 8.400H16V16l-8.400-1.200z" />
        </svg>,
        <svg key="find" viewBox="0 0 16 16" className="h-[16px] w-[16px]" fill="none" stroke="#fff" strokeWidth="1.300">
          <circle cx="10.500" cy="5.500" r="4.800" />
          <path d="M7 9 .500 15.500" />
        </svg>,
        <svg key="cortana" viewBox="0 0 16 16" className="h-[16px] w-[16px]" fill="none" stroke="#fff" strokeWidth="2">
          <circle cx="8" cy="8" r="6.800" />
        </svg>,
        <svg key="tasks" viewBox="0 0 16 16" className="h-[16px] w-[16px]" fill="none" stroke="#fff">
          <path d="M.5 0v2.500h10V0M.5 5.500h10v5H.5zM.5 16v-2.500h10V16M14.500 0v3M14.500 9v7" />
          <path d="M13 4h3v3h-3z" fill="#fff" stroke="none" />
        </svg>,
      ].map((icon, i) => (
        <button key={i} className="flex h-[40px] w-[48px] items-center justify-center">
          {icon}
        </button>
      ))}
    </div>
    <TaskButton label="Swirl">
      <svg viewBox="-11 -11 22 22" className="h-[21px] w-[21px]">
        {[0, 72, 144, 216, 288].map((angle) => (
          <path
            key={angle}
            transform={`rotate(${angle})`}
            d="M0 0C-5-1-8-5-6-8.500-4-11.500 2-12 4.500-9 6-6.500 4-5 2.500-4 .5-3 0-2 0 0z"
            fill="#fff"
            stroke="#20343e"
            strokeWidth=".8"
          />
        ))}
      </svg>
    </TaskButton>
    <span className="w-[7px]" />
    <TaskButton label="记事本" open>
      <svg viewBox="0 0 22 22" className="h-[22px] w-[22px]">
        <path d="m7 1 14 1-3 19-7-3z" fill="#e8e4cf" />
        <path d="M6 2 18 1l-4 17-14 0z" fill="#54aebd" />
        <path d="m7 4 9-1-2 7-9 2z" fill="#a4dce4" />
        <path d="M6 2 18 1" stroke="#ddd" strokeWidth="1.500" />
      </svg>
    </TaskButton>
    <TaskButton label="WPS" open>
      <svg viewBox="0 0 22 22" className="h-[21px] w-[21px]">
        <rect width="22" height="22" rx="2" fill="#2f86f6" />
        <path
          d="M3.500 6.500H7M5 6.500l2.500 9h2L12 9l2.500 6.500h1.500l3-9h-8M8 6.500l2 6"
          fill="none"
          stroke="#fff"
          strokeWidth="1.600"
        />
      </svg>
    </TaskButton>
    <TaskButton label="Chrome" open>
      <svg viewBox="-12 -12 24 24" className="h-[24px] w-[24px]">
        <circle r="11" fill="#f9c72e" />
        <path d="M-9.500-5.500A11 11 0 0 1 9.500-5.500H0L-4.800 2.500z" fill="#e2453a" />
        <path d="M-9.500-5.500A11 11 0 0 0-1 11L4.500 2.500H-4.800z" fill="#22a05a" />
        <circle r="5.300" fill="#fff" />
        <circle r="4.200" fill="#3f7fee" />
      </svg>
    </TaskButton>
    <TaskButton label="Dreamweaver" open current>
      <span className="flex h-[20px] w-[22px] items-center justify-center border-2 border-[#7fe000] bg-[#0c2c10] font-['Liberation_Sans_Narrow','Open_Sans',sans-serif] text-[13px] leading-[16px] font-bold text-[#8cf000]">
        Dw
      </span>
    </TaskButton>
    <TaskButton label="Bamboo" open>
      <svg viewBox="0 0 24 24" className="h-[24px] w-[24px]">
        <circle cx="12" cy="12" r="11.500" fill="#7fae08" />
        <path
          d="M5 4 4 19M9 2v14M13 1l-1 22M17 2v12M21 7l-1 10"
          stroke="#4a7600"
          strokeWidth="1.200"
          fill="none"
        />
        <path d="M7 3v14M11 1v14M15 2l-1 19M19 4v12" stroke="#b0dc18" fill="none" />
      </svg>
    </TaskButton>
    <div className="ml-auto flex items-center">
      <div className="mr-[7px] flex items-center gap-[7px]">
        <svg viewBox="0 0 14 8" className="h-[8px] w-[14px]" fill="none" stroke="#fff" strokeWidth="1.400">
          <path d="m1 7 6-6 6 6" />
        </svg>
        <svg viewBox="0 0 17 17" className="h-[17px] w-[17px]" fill="none" stroke="#fff" strokeWidth="1.300">
          <path d="M1 3.500 16 1v14l-15-1zM5 8a3 3 0 0 1 6-1V4.500M11 9a3 3 0 0 1-6 1v2.500" />
          <circle cx="13" cy="13" r="3" fill="#ff9800" stroke="none" />
        </svg>
        <svg viewBox="0 0 17 15" className="h-[15px] w-[17px]">
          <ellipse cx="6.500" cy="5.500" rx="6.300" ry="5.300" fill="#2fc05a" />
          <ellipse cx="11.500" cy="9.500" rx="5" ry="4.300" fill="#eee" />
          <path d="M4.500 4h1M8 4h1M10 8.500h1M13 8.500h1" stroke="#265" />
        </svg>
        <Penguin scarf="#e02010" />
        <Penguin scarf="#f01cc0" />
        <svg viewBox="0 0 14 15" className="mx-px h-[15px] w-[14px]" fill="#fff">
          <path d="M7 0c1 0 1 1 1 1.500 3 .5 4 2.500 4 5V10l2 2H0l2-2V6.500c0-2.500 1-4.500 4-5C6 1 6 0 7 0zM5 13h4l-2 2z" />
        </svg>
        <svg viewBox="0 0 17 15" className="h-[15px] w-[17px]" fill="none" stroke="#fff">
          <path d="M5 2.500h11v8H4.500V8M10 11v3M7 14h7M.5 1.500h4v4h-4zM2.500 6v7.500H4" />
        </svg>
        <svg viewBox="0 0 17 14" className="h-[14px] w-[17px]" fill="none" stroke="#fff">
          <path d="M.5 5h3L7 1.500v11L3.500 9h-3zM9 5c1 1 1 3 0 4M11.500 3c2 2 2 6 0 8M14 1c3 3 3 9 0 12" />
        </svg>
      </div>
      <span className="w-[20px] text-[16px] leading-[20px]">中</span>
      <span className="ml-[11px] flex h-[16px] w-[16px] items-center justify-center overflow-hidden bg-white text-[12px] leading-[14px] text-black">
        拼
      </span>
      <div className="w-[133px] text-center text-[12px] leading-[19px]">
        <div>17:18</div>
        <div>2020/11/13 星期五</div>
      </div>
      <button aria-label="通知" className="relative w-[38px]">
        <svg viewBox="0 0 28 26" className="h-[26px] w-[28px]">
          <path d="M3 4h16v12H9l-3 3v-3H3z" fill="#fff" />
          <path d="M5 7.500h12M5 10.500h12M5 13.500h7" stroke="#203040" />
          <circle cx="18" cy="18" r="7.500" fill="#2c3138" stroke="#777" />
        </svg>
        <span className="absolute bottom-px left-[14px] text-[12px] leading-[14px] font-bold">2</span>
      </button>
      <span className="h-[40px] w-[5px] border-l border-[#6a7488]" />
    </div>
  </footer>
);

const App = () => (
  <div className="relative flex h-screen flex-col overflow-hidden bg-[#d6d6d6]">
    <MenuBar />
    <InsertBar />
    <DocumentBar />
    <Editor />
    <StatusBar />
    <PropertyInspector />
    <Taskbar />
    <BrowserLab />
    <SidePanels />
    <InsertMenu />
    <div
      className={clsx(
        "pointer-events-none absolute right-[60px] bottom-[80px] w-[205px] whitespace-nowrap text-[#888]/60",
        uiFont
      )}
    >
      <p className="text-[20px] leading-[28px]">激活 Windows</p>
      <p className="text-[15px] leading-[20px]">转到“设置”以激活 Windows。</p>
    </div>
    <div className="pointer-events-none absolute right-[5px] bottom-[20px] font-['Noto_Sans_CJK_SC',sans-serif] text-[37px] leading-[40px] font-black text-[#808080]">
      最需教育
    </div>
  </div>
);

export default App;
